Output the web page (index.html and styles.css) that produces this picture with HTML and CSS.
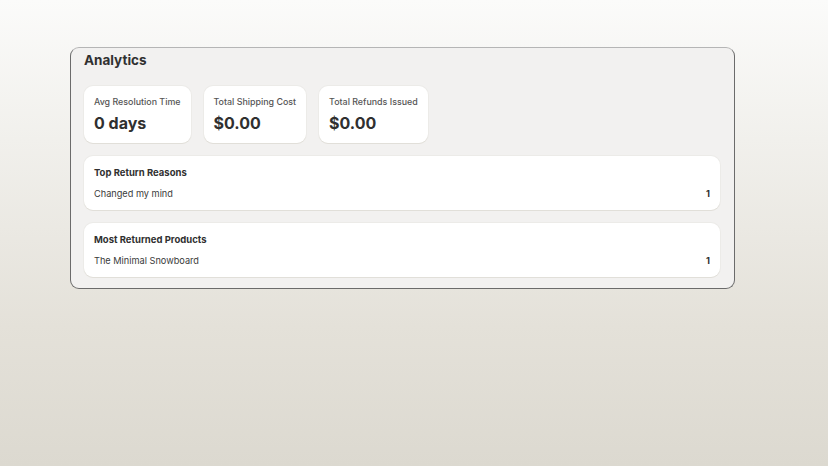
FILE: index.html
```html
<!DOCTYPE html>
<html lang="en">
<head>
<meta charset="utf-8">
<title>Analytics</title>
<link rel="stylesheet" href="styles.css">
</head>
<body>
  <main class="page">
    <section class="panel">
      <h2 class="panel-title">Analytics</h2>
      <div class="stats">
        <div class="stat">
          <div class="stat-label">Avg Resolution Time</div>
          <div class="stat-value">0 days</div>
        </div>
        <div class="stat">
          <div class="stat-label">Total Shipping Cost</div>
          <div class="stat-value">$0.00</div>
        </div>
        <div class="stat">
          <div class="stat-label">Total Refunds Issued</div>
          <div class="stat-value">$0.00</div>
        </div>
      </div>
      <div class="list-card">
        <h3 class="list-title">Top Return Reasons</h3>
        <div class="list-row"><span>Changed my mind</span><span class="count">1</span></div>
      </div>
      <div class="list-card">
        <h3 class="list-title">Most Returned Products</h3>
        <div class="list-row"><span>The Minimal Snowboard</span><span class="count">1</span></div>
      </div>
    </section>
  </main>
</body>
</html>
```

FILE: styles.css
```css
* { box-sizing: border-box; }

html, body {
  margin: 0;
  height: 100%;
}

body {
  font-family: Inter, "Noto Sans", "Liberation Sans", sans-serif;
  color: #303030;
  background: linear-gradient(180deg, #fbfbfa 0%, #f1f0ec 30%, #e4e1d9 70%, #dcd9d0 100%);
}

.page {
  padding: 47px 94px 0 70px;
}

.panel {
  width: 665px;
  background: #f2f1f0;
  border-radius: 9px;
  border: 1px solid #6b6b6b;
  border-top-color: #b5b5b5;
  padding: 4px 14px 11px 13px;
}

.panel-title {
  margin: 0;
  font-size: 13.5px;
  font-weight: 700;
  line-height: 17px;
  color: #303030;
}

.stats {
  display: flex;
  gap: 13px;
  margin-top: 17px;
}

.stat {
  background: #fff;
  border-radius: 9px;
  box-shadow: 0 1px 0 #e1dfd9, 0 0 0 1px #ecebe8;
  padding: 10px 10px;
  height: 57px;
  white-space: nowrap;
}

.stat-label {
  font-size: 8.9px;
  line-height: 12px;
  color: #555;
  font-weight: 500;
}

.stat-value {
  margin-top: 4px;
  font-size: 16px;
  line-height: 22px;
  font-weight: 700;
  color: #303030;
}

.list-card {
  background: #fff;
  border-radius: 9px;
  box-shadow: 0 1px 0 #e1dfd9, 0 0 0 1px #ecebe8;
  padding: 11px 10px 9px 10px;
  margin-top: 13px;
  height: 54px;
}

.list-title {
  margin: 0;
  font-size: 9.5px;
  line-height: 12px;
  font-weight: 650;
  color: #303030;
}

.list-row {
  display: flex;
  justify-content: space-between;
  margin-top: 9px;
  font-size: 9.2px;
  line-height: 12px;
  color: #3a3a3a;
}

.count {
  font-weight: 700;
  color: #303030;
}
```
